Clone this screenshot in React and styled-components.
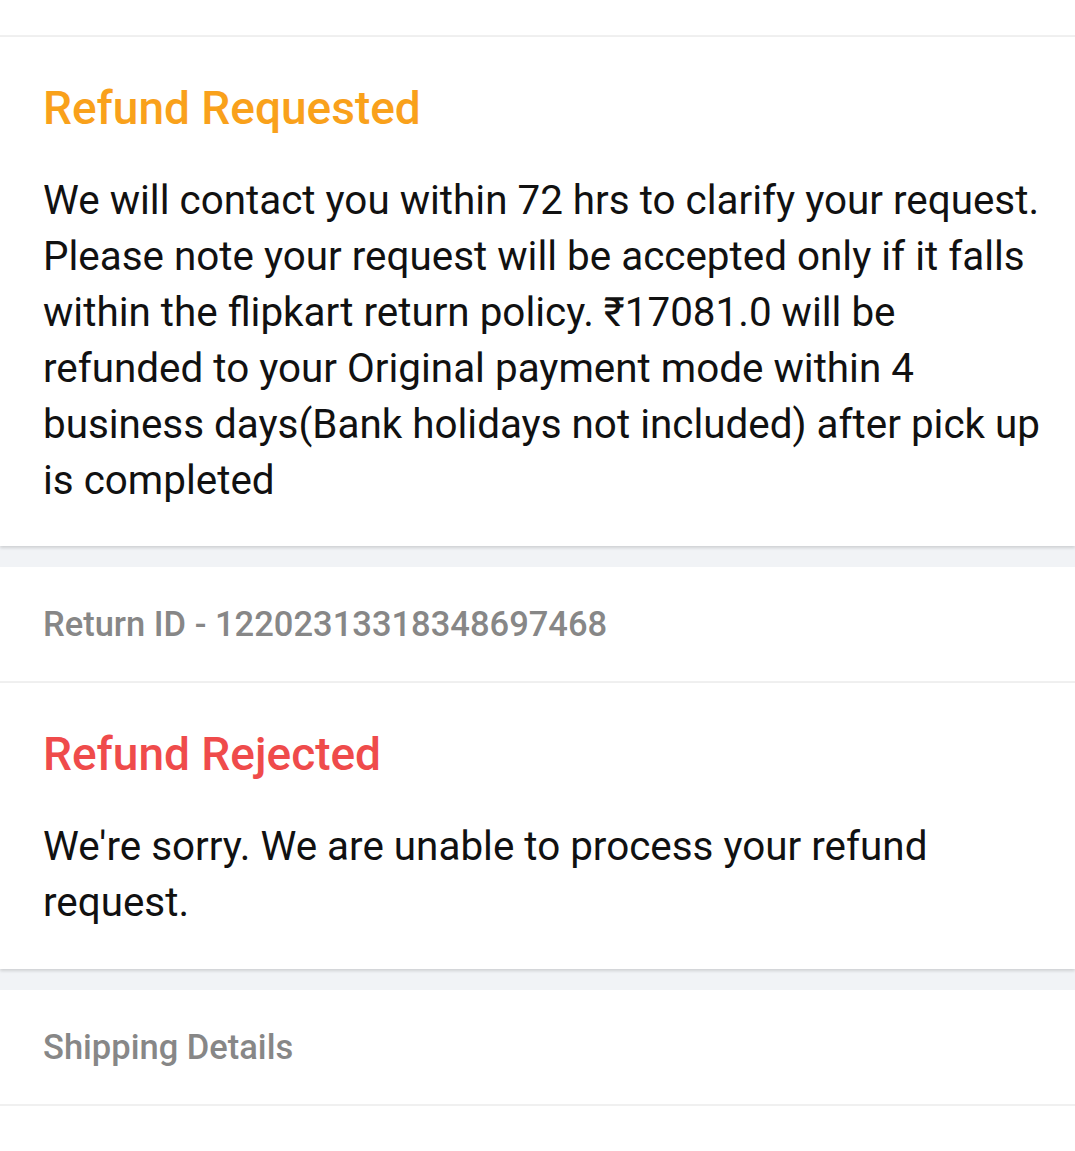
import styled, { createGlobalStyle } from "styled-components";

const GlobalStyle = createGlobalStyle`
  body {
    margin: 0;
    background: #fff;
    font-family: Roboto, "Noto Sans", sans-serif;
    -webkit-font-smoothing: antialiased;
  }
`;

const Page = styled.div`
  width: 1075px;
  min-height: 1151px;
  background: #fff;
  display: flex;
  flex-direction: column;
`;

const TopStrip = styled.div`
  height: 35px;
  border-bottom: 2px solid #f0f0f0;
`;

const Card = styled.section`
  position: relative;
  background: #fff;
  padding: 43px 30px ${({ $bottom }) => $bottom}px 43px;
  box-shadow: 0 2px 3px rgba(0, 0, 0, 0.14);
  z-index: 1;
`;

const Title = styled.h2`
  margin: 0;
  font-size: 46px;
  line-height: 56px;
  font-weight: 500;
  color: ${({ $tone }) => $tone};
`;

const Body = styled.p`
  margin: 37px 0 0;
  font-size: 40.4px;
  line-height: 56px;
  font-weight: 400;
  color: #111;
`;

const Band = styled.div`
  height: 21px;
  background: #f1f3f6;
`;

const InfoRow = styled.div`
  height: 114px;
  display: flex;
  align-items: center;
  padding: 0 43px;
  border-bottom: 2px solid #f0f0f0;
  font-size: 34.5px;
  font-weight: 500;
  color: #878787;
`;

export default function App() {
  return (
    <Page>
      <GlobalStyle />
      <TopStrip />
      <Card $bottom={37}>
        <Title $tone="#f9a11b">Refund Requested</Title>
        <Body>
          We will contact you within 72 hrs to clarify your request. Please
          note your request will be accepted only if it falls within the
          flipkart return policy. ₹17081.0 will be refunded to your Original
          payment mode within 4 business days(Bank holidays not included)
          after pick up is completed
        </Body>
      </Card>
      <Band />
      <InfoRow>Return ID - 12202313318348697468</InfoRow>
      <Card $bottom={38}>
        <Title $tone="#ef4b4b">Refund Rejected</Title>
        <Body>
          We're sorry. We are unable to process your refund request.
        </Body>
      </Card>
      <Band />
      <InfoRow>Shipping Details</InfoRow>
    </Page>
  );
}
